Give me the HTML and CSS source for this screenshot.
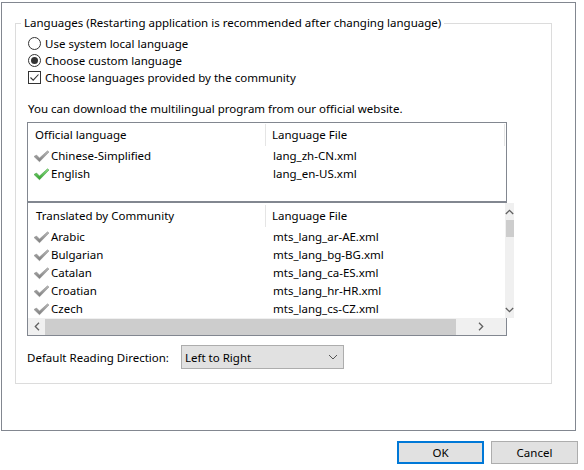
FILE: index.html
```html
<!DOCTYPE html>
<html>
<head>
<meta charset="utf-8">
<link rel="stylesheet" href="styles.css">
</head>
<body>
<div class="window">
  <fieldset class="group">
    <legend class="group-title">Languages (Restarting application is recommended after changing language)</legend>
    <div class="group-body">
      <div class="opt"><span class="radio"></span><span>Use system local language</span></div>
      <div class="opt"><span class="radio checked"></span><span>Choose custom language</span></div>
      <div class="opt"><span class="checkbox"><svg width="11" height="11" viewBox="0 0 11 11"><path d="M1.5 5.5 L4.2 8.2 L9.5 2.5" fill="none" stroke="#333" stroke-width="1.1"/></svg></span><span>Choose languages provided by the community</span></div>
      <p class="note">You can download the multilingual program from our official website.</p>

      <div class="list list-official">
        <div class="list-head">
          <div class="col1">Official language</div>
          <div class="col2">Language File</div>
          <div class="col-end"></div>
        </div>
        <div class="row"><div class="col1"><svg class="tick" width="17" height="13" viewBox="0 0 17 13"><defs><linearGradient id="g1" x1="0" y1="0" x2="0" y2="1"><stop offset="0" stop-color="#b9b9b9"/><stop offset="1" stop-color="#7c7c7c"/></linearGradient></defs><path d="M1 6.5 L3.5 5 L6.5 8 L14.5 0.8 L16 2 L6.5 11.8 Z" fill="url(#g1)" stroke="#8a8a8a" stroke-width="0.5"/></svg>Chinese-Simplified</div><div class="col2">lang_zh-CN.xml</div></div>
        <div class="row"><div class="col1"><svg class="tick" width="17" height="13" viewBox="0 0 17 13"><defs><linearGradient id="g2" x1="0" y1="0" x2="0" y2="1"><stop offset="0" stop-color="#8fe08a"/><stop offset="1" stop-color="#2f9e2a"/></linearGradient></defs><path d="M1 6.5 L3.5 5 L6.5 8 L14.5 0.8 L16 2 L6.5 11.8 Z" fill="url(#g2)" stroke="#3a9a35" stroke-width="0.5"/></svg>English</div><div class="col2">lang_en-US.xml</div></div>
      </div>

      <div class="list list-community">
        <div class="list-main">
          <div class="list-content">
            <div class="list-head head2">
              <div class="col1">Translated by Community</div>
              <div class="col2">Language File</div>
            </div>
            <div class="row"><div class="col1"><svg class="tick" width="17" height="13" viewBox="0 0 17 13"><path d="M1 6.5 L3.5 5 L6.5 8 L14.5 0.8 L16 2 L6.5 11.8 Z" fill="url(#g1)" stroke="#8a8a8a" stroke-width="0.5"/></svg>Arabic</div><div class="col2">mts_lang_ar-AE.xml</div></div>
            <div class="row"><div class="col1"><svg class="tick" width="17" height="13" viewBox="0 0 17 13"><path d="M1 6.5 L3.5 5 L6.5 8 L14.5 0.8 L16 2 L6.5 11.8 Z" fill="url(#g1)" stroke="#8a8a8a" stroke-width="0.5"/></svg>Bulgarian</div><div class="col2">mts_lang_bg-BG.xml</div></div>
            <div class="row"><div class="col1"><svg class="tick" width="17" height="13" viewBox="0 0 17 13"><path d="M1 6.5 L3.5 5 L6.5 8 L14.5 0.8 L16 2 L6.5 11.8 Z" fill="url(#g1)" stroke="#8a8a8a" stroke-width="0.5"/></svg>Catalan</div><div class="col2">mts_lang_ca-ES.xml</div></div>
            <div class="row"><div class="col1"><svg class="tick" width="17" height="13" viewBox="0 0 17 13"><path d="M1 6.5 L3.5 5 L6.5 8 L14.5 0.8 L16 2 L6.5 11.8 Z" fill="url(#g1)" stroke="#8a8a8a" stroke-width="0.5"/></svg>Croatian</div><div class="col2">mts_lang_hr-HR.xml</div></div>
            <div class="row"><div class="col1"><svg class="tick" width="17" height="13" viewBox="0 0 17 13"><path d="M1 6.5 L3.5 5 L6.5 8 L14.5 0.8 L16 2 L6.5 11.8 Z" fill="url(#g1)" stroke="#8a8a8a" stroke-width="0.5"/></svg>Czech</div><div class="col2">mts_lang_cs-CZ.xml</div></div>
          </div>
          <div class="vscroll">
            <div class="sb-btn"><svg width="9" height="6" viewBox="0 0 9 6"><path d="M0.8 5 L4.5 1.3 L8.2 5" fill="none" stroke="#606060" stroke-width="1.3"/></svg></div>
            <div class="vthumb"></div>
            <div class="vtrack"></div>
            <div class="sb-btn"><svg width="9" height="6" viewBox="0 0 9 6"><path d="M0.8 1 L4.5 4.7 L8.2 1" fill="none" stroke="#606060" stroke-width="1.3"/></svg></div>
          </div>
        </div>
        <div class="hscroll-row">
          <div class="hscroll">
            <div class="sb-btn-h"><svg width="6" height="9" viewBox="0 0 6 9"><path d="M5 0.8 L1.3 4.5 L5 8.2" fill="none" stroke="#606060" stroke-width="1.3"/></svg></div>
            <div class="hthumb"></div>
            <div class="htrack"></div>
            <div class="sb-btn-h"><svg width="6" height="9" viewBox="0 0 6 9"><path d="M1 0.8 L4.7 4.5 L1 8.2" fill="none" stroke="#606060" stroke-width="1.3"/></svg></div>
          </div>
          <div class="corner"></div>
        </div>
      </div>

      <div class="direction">
        <span class="dir-label">Default Reading Direction:</span>
        <div class="select"><span>Left to Right</span><svg width="10" height="6" viewBox="0 0 10 6"><path d="M1 1 L5 5 L9 1" fill="none" stroke="#555" stroke-width="1"/></svg></div>
      </div>
    </div>
  </fieldset>
</div>
<div class="buttons">
  <div class="btn btn-default">OK</div>
  <div class="btn">Cancel</div>
</div>
</body>
</html>
```
FILE: styles.css
```css
html, body {
  margin: 0;
  padding: 0;
  background: #ffffff;
}
body {
  width: 584px;
  height: 470px;
  overflow: hidden;
  font-family: "Noto Sans", "Liberation Sans", sans-serif;
  font-size: 11.5px;
  color: #000;
}
.window {
  box-sizing: border-box;
  margin: 2px 0 0 1px;
  width: 575px;
  height: 429px;
  border: 1px solid #828790;
  padding-top: 12px;
}
.group {
  box-sizing: border-box;
  margin: 0 0 0 13px;
  width: 537px;
  min-width: 0;
  padding: 0;
  border: 1px solid #dcdcdc;
}
.group-title {
  margin-left: 5px;
  padding: 0 3px;
  height: 16px;
  line-height: 16px;
}
.group-body {
  padding: 4px 0 14px 12px;
}
.opt {
  display: flex;
  align-items: center;
  height: 17px;
  line-height: 17px;
}
.radio {
  box-sizing: border-box;
  width: 13px;
  height: 13px;
  border: 1px solid #333;
  border-radius: 50%;
  margin-right: 4px;
  display: flex;
  align-items: center;
  justify-content: center;
}
.radio.checked::after {
  content: "";
  width: 7px;
  height: 7px;
  border-radius: 50%;
  background: #333;
}
.checkbox {
  box-sizing: border-box;
  width: 13px;
  height: 13px;
  border: 1px solid #333;
  margin-right: 4px;
  display: flex;
  align-items: center;
  justify-content: center;
}
.note {
  margin: 14px 0 0 0;
  height: 17px;
  line-height: 17px;
}
.list {
  box-sizing: border-box;
  width: 480px;
  margin-left: -1px;
  border: 1px solid #828790;
}
.list-official {
  margin-top: 5px;
  height: 80px;
}
.list-community {
  height: 134px;
}
.list-head {
  display: flex;
  height: 24px;
  align-items: center;
}
.head2 {
  height: 25px;
}
.list-head .col1 {
  box-sizing: border-box;
  width: 238px;
  padding-left: 7px;
  height: 22px;
  line-height: 22px;
  border-right: 1px solid #e5e5e5;
}
.head2 .col1 {
  padding-left: 8px;
}
.list-head .col2 {
  box-sizing: border-box;
  width: 239px;
  padding-left: 6px;
  height: 22px;
  line-height: 22px;
  border-right: 1px solid #e5e5e5;
}
.head2 .col2 {
  border-right: none;
}
.row {
  display: flex;
  height: 18px;
  line-height: 18px;
}
.row .col1 {
  box-sizing: border-box;
  width: 239px;
  padding-left: 5px;
  display: flex;
  align-items: center;
}
.row .col2 {
  padding-left: 6px;
}
.tick {
  margin-right: 1px;
  flex-shrink: 0;
}
.list-main {
  display: flex;
  height: 115px;
}
.list-content {
  flex: 1;
}
.vscroll {
  width: 17px;
  background: #f0f0f0;
  display: flex;
  flex-direction: column;
}
.sb-btn {
  height: 17px;
  display: flex;
  align-items: center;
  justify-content: center;
}
.vthumb {
  height: 17px;
  margin-left: 1px;
  background: #cdcdcd;
}
.vtrack {
  flex: 1;
}
.hscroll-row {
  display: flex;
  height: 17px;
}
.hscroll {
  flex: 1;
  display: flex;
  background: #f0f0f0;
}
.sb-btn-h {
  width: 17px;
  display: flex;
  align-items: center;
  justify-content: center;
}
.hthumb {
  width: 411px;
  margin-top: 1px;
  background: #cdcdcd;
}
.htrack {
  flex: 1;
}
.corner {
  width: 17px;
  background: #f0f0f0;
}
.direction {
  display: flex;
  align-items: center;
  margin-top: 9px;
  margin-left: -1px;
}
.dir-label {
  width: 154px;
}
.select {
  box-sizing: border-box;
  width: 163px;
  height: 24px;
  border: 1px solid #adadad;
  background: #e1e1e1;
  display: flex;
  align-items: center;
  justify-content: space-between;
  padding: 0 5px 0 3px;
}
.buttons {
  display: flex;
  justify-content: flex-end;
  gap: 7px;
  margin-top: 10px;
  padding-right: 6px;
}
.btn {
  box-sizing: border-box;
  width: 87px;
  height: 23px;
  border: 1px solid #adadad;
  background: #e1e1e1;
  display: flex;
  align-items: center;
  justify-content: center;
}
.btn-default {
  border: 2px solid #0078d7;
}
```
